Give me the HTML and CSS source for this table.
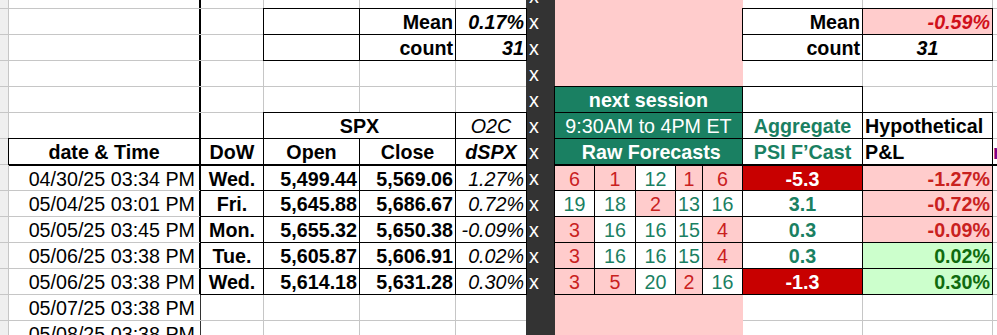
FILE: index.html
```
<!DOCTYPE html>
<html lang="en">
<head>
<meta charset="utf-8">
<title>Forecast sheet</title>
<link rel="stylesheet" href="styles.css">
</head>
<body>
<div class="sheet">
  <div class="fcol">
    <div class="x">x</div><div class="x">x</div><div class="x">x</div><div class="x">x</div>
    <div class="x">x</div><div class="x">x</div><div class="x">x</div><div class="x">x</div>
    <div class="x">x</div><div class="x">x</div><div class="x">x</div><div class="x">x</div>
  </div>
  <div class="pink ptop"></div>
  <div class="pink pbot"></div>

  <!-- row 0 (partial) -->
  <div class="c rh"></div><div class="c ath"></div><div class="c"></div><div class="c"></div><div class="c"></div><div class="c"></div>
  <div class="c"></div><div class="c"></div><div class="c"></div>

  <!-- row 1 -->
  <div class="c rh"></div><div class="c ath"></div><div class="c"></div>
  <div class="c b"></div>
  <div class="c b r bold">Mean</div>
  <div class="c b r bold it">0.17%</div>
  <div class="c b r bold">Mean</div>
  <div class="c b r bold it negtxt">-0.59%</div>
  <div class="c"></div>

  <!-- row 2 -->
  <div class="c rh"></div><div class="c ath"></div><div class="c"></div>
  <div class="c b"></div>
  <div class="c b r bold">count</div>
  <div class="c b r bold it">31</div>
  <div class="c b r bold">count</div>
  <div class="c b m bold it">31</div>
  <div class="c"></div>

  <!-- row 3 -->
  <div class="c rh"></div><div class="c ath"></div><div class="c"></div><div class="c"></div><div class="c"></div><div class="c"></div>
  <div class="c"></div><div class="c"></div><div class="c"></div>

  <!-- row 4 -->
  <div class="c rh"></div><div class="c ath"></div><div class="c"></div><div class="c"></div><div class="c"></div><div class="c"></div>
  <div class="c b grn bold">next session</div>
  <div class="c b"></div><div class="c"></div><div class="c"></div>

  <!-- row 5 -->
  <div class="c rh"></div><div class="c ath"></div><div class="c"></div>
  <div class="c b m bold span2">SPX</div>
  <div class="c b m it">O2C</div>
  <div class="c b grn">9:30AM to 4PM ET</div>
  <div class="c b m bold tl">Aggregate</div>
  <div class="c b bold">Hypothetical</div>
  <div class="c"></div>

  <!-- row 6 header -->
  <div class="c rh"></div>
  <div class="c b ad m bold">date &amp; Time</div>
  <div class="c b m bold">DoW</div>
  <div class="c b m bold">Open</div>
  <div class="c b m bold">Close</div>
  <div class="c b m bold it">dSPX</div>
  <div class="c b grn bold">&nbsp;Raw Forecasts</div>
  <div class="c b m bold tl">PSI F’Cast</div>
  <div class="c b bold">P&amp;L</div>
  <div class="c nh bold purple">n</div>

  <!-- row 7 -->
  <div class="c rh"></div>
  <div class="c ad date top">04/30/25 03:34 PM</div>
  <div class="c b m bold top">Wed.</div>
  <div class="c b r bold top">5,499.44</div>
  <div class="c b r bold top">5,569.06</div>
  <div class="c b r it top">1.27%</div>
  <div class="c b m pk top">6</div>
  <div class="c b m pk top">1</div>
  <div class="c b m tl top">12</div>
  <div class="c b m pk top">1</div>
  <div class="c b m pk top">6</div>
  <div class="c b m bold neg top">-5.3</div>
  <div class="c b r bold plr top">-1.27%</div>
  <div class="c top"></div>

  <!-- row 8 -->
  <div class="c rh"></div>
  <div class="c ad date">05/04/25 03:01 PM</div>
  <div class="c b m bold">Fri.</div>
  <div class="c b r bold">5,645.88</div>
  <div class="c b r bold">5,686.67</div>
  <div class="c b r it">0.72%</div>
  <div class="c b m tl">19</div>
  <div class="c b m tl">18</div>
  <div class="c b m pk">2</div>
  <div class="c b m tl">13</div>
  <div class="c b m tl">16</div>
  <div class="c b m bold tl">3.1</div>
  <div class="c b r bold plr">-0.72%</div>
  <div class="c"></div>

  <!-- row 9 -->
  <div class="c rh"></div>
  <div class="c ad date">05/05/25 03:45 PM</div>
  <div class="c b m bold">Mon.</div>
  <div class="c b r bold">5,655.32</div>
  <div class="c b r bold">5,650.38</div>
  <div class="c b r it">-0.09%</div>
  <div class="c b m pk">3</div>
  <div class="c b m tl">16</div>
  <div class="c b m tl">16</div>
  <div class="c b m tl">15</div>
  <div class="c b m pk">4</div>
  <div class="c b m bold tl">0.3</div>
  <div class="c b r bold plr">-0.09%</div>
  <div class="c"></div>

  <!-- row 10 -->
  <div class="c rh"></div>
  <div class="c ad date">05/06/25 03:38 PM</div>
  <div class="c b m bold">Tue.</div>
  <div class="c b r bold">5,605.87</div>
  <div class="c b r bold">5,606.91</div>
  <div class="c b r it">0.02%</div>
  <div class="c b m pk">3</div>
  <div class="c b m tl">16</div>
  <div class="c b m tl">16</div>
  <div class="c b m tl">15</div>
  <div class="c b m pk">4</div>
  <div class="c b m bold tl">0.3</div>
  <div class="c b r bold plg">0.02%</div>
  <div class="c"></div>

  <!-- row 11 -->
  <div class="c rh"></div>
  <div class="c ad date">05/06/25 03:38 PM</div>
  <div class="c b m bold">Wed.</div>
  <div class="c b r bold">5,614.18</div>
  <div class="c b r bold">5,631.28</div>
  <div class="c b r it">0.30%</div>
  <div class="c b m pk">3</div>
  <div class="c b m pk">5</div>
  <div class="c b m tl">20</div>
  <div class="c b m pk">2</div>
  <div class="c b m tl">16</div>
  <div class="c b m bold neg">-1.3</div>
  <div class="c b r bold plg">0.30%</div>
  <div class="c"></div>

  <!-- row 12 -->
  <div class="c rh"></div>
  <div class="c al date">05/07/25 03:38 PM</div>
  <div class="c"></div><div class="c"></div><div class="c"></div><div class="c"></div>
  <div class="c"></div><div class="c"></div><div class="c"></div>

  <!-- row 13 -->
  <div class="c rh"></div>
  <div class="c al date">05/08/25 03:38 PM</div>
  <div class="c"></div><div class="c"></div><div class="c"></div><div class="c"></div>
  <div class="c"></div><div class="c"></div><div class="c"></div>
</div>
</body>
</html>
```
FILE: styles.css
```
html, body {
  margin: 0;
  padding: 0;
  overflow: hidden;
  background: #fff;
}

.sheet {
  display: grid;
  grid-template-columns: 8px 191px 62px 95px 95px 70px 27px 39px 40px 39px 26px 39px 119px 129px 100px;
  grid-template-rows: repeat(14, 25px);
  gap: 1px;
  width: max-content;
  margin-top: -17px;
  background: #c6c6c6;
  font-family: "Liberation Sans", Arial, sans-serif;
  font-size: 19.7px;
  color: #000;
}

.c {
  background: #fff;
  padding: 1px 2px 0;
  line-height: 24px;
  white-space: nowrap;
  overflow: hidden;
}

.rh { background: #efefef; padding: 0; }

.b { outline: 1px solid #000; }
.r { text-align: right; }
.m { text-align: center; }
.bold { font-weight: bold; }
.it { font-style: italic; }

.span2 { grid-column: span 2; }

/* column A right rule */
.ath { border-right: 2px solid #000; margin-right: -1px; }
.ad { border-right: 1px solid #000; }
.al { border-right: 1px solid #333; margin-right: -1px; }
.date { text-align: right; padding-right: 4px; }
.al.date { padding-right: 5px; }

.top { border-top: 1px solid #000; }
.nh { padding-left: 0; box-shadow: 0 1px 0 #000; }
.purple { color: #800080; }

/* dark separator column */
.fcol {
  grid-column: 7;
  grid-row: 1 / 15;
  margin: 0 -1px;
  background: #333;
  color: #fff;
  padding-left: 3px;
}
.x {
  box-sizing: border-box;
  height: 26px;
  padding-top: 1px;
  line-height: 24px;
}

/* pink forecast column fill */
.pink { background: #ffcccc; margin-right: -1px; }
.ptop { grid-column: 8 / 13; grid-row: 1 / 5; }
.pbot { grid-column: 8 / 13; grid-row: 13 / 15; }

.grn {
  grid-column: span 5;
  background: #1a8062;
  color: #fff;
  text-align: center;
}

.tl { color: #1a8062; }
.pk { background: #ffcccc; color: #c9211e; }
.neg { background: #c80000; color: #fff; }
.negtxt { background: #ffcccc; color: #d0101a; }
.plr { background: #ffcccc; color: #c9211e; }
.plg { background: #ccffcc; color: #0f6b0f; }
```
